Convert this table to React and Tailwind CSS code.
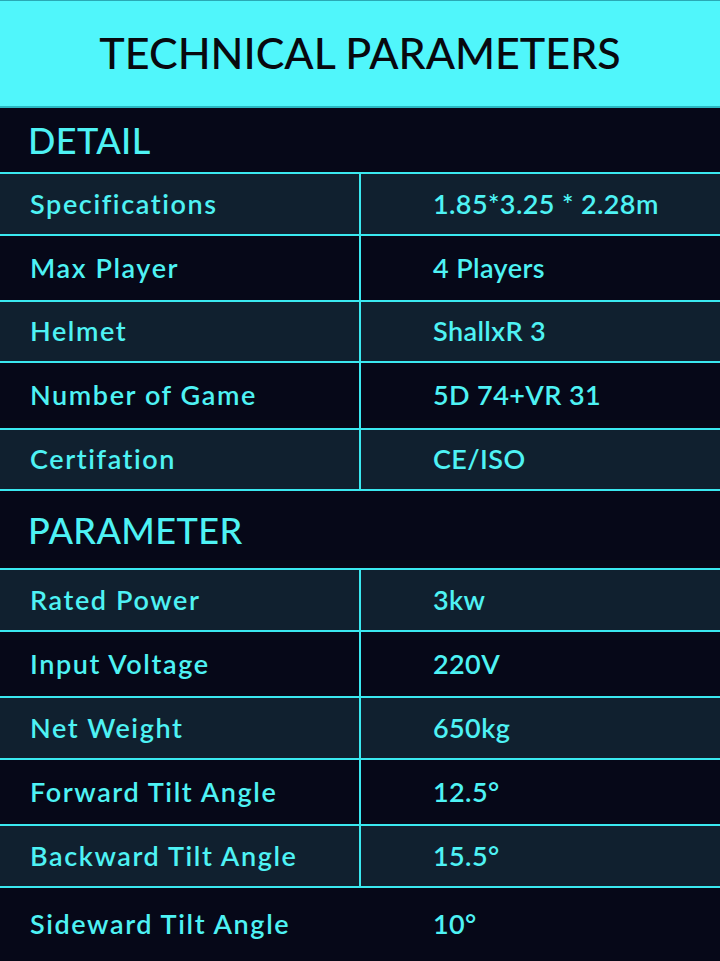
import React from 'react';

const detailRows = [
  { label: 'Specifications', value: '1.85*3.25 * 2.28m', h: 'h-[62px]', light: true },
  { label: 'Max Player', value: '4 Players', h: 'h-[66px]', light: false },
  { label: 'Helmet', value: 'ShallxR 3', h: 'h-[61px]', light: true },
  { label: 'Number of Game', value: '5D 74+VR 31', h: 'h-[67px]', light: false },
  { label: 'Certifation', value: 'CE/ISO', h: 'h-[61px]', light: true }
];

const paramRows = [
  { label: 'Rated Power', value: '3kw', h: 'h-[62px]', light: true },
  { label: 'Input Voltage', value: '220V', h: 'h-[66px]', light: false },
  { label: 'Net Weight', value: '650kg', h: 'h-[62px]', light: true },
  { label: 'Forward Tilt Angle', value: '12.5°', h: 'h-[66px]', light: false },
  { label: 'Backward Tilt Angle', value: '15.5°', h: 'h-[62px]', light: true },
  { label: 'Sideward Tilt Angle', value: '10°', h: 'h-[73px]', light: false, last: true }
];

function Row({ row }) {
  return (
    <div
      className={`flex ${row.h} ${row.light ? 'bg-[#10202f]' : 'bg-[#060818]'} ${
        row.last ? '' : 'border-b-2 border-[#3ae8f0]'
      }`}
    >
      <div
        className={`w-[361px] flex items-center pl-[30px] tracking-[1.6px] ${
          row.last ? '' : 'border-r-2 border-[#3ae8f0]'
        }`}
      >
        {row.label}
      </div>
      <div className="flex-1 flex items-center pl-[72px]">{row.value}</div>
    </div>
  );
}

function SectionTitle({ title, h }) {
  return (
    <div className={`${h} flex items-center pl-[28px] bg-[#060818] border-b-2 border-[#3ae8f0] text-[36px] font-medium`}>
      {title}
    </div>
  );
}

export default function App() {
  return (
    <div
      className="w-[720px] h-[961px] overflow-hidden bg-[#060818] text-[#4ef2f4] text-[27px] font-semibold tracking-[0.4px]"
      style={{ fontFamily: 'Lato, "Open Sans", sans-serif' }}
    >
      <div className="h-[108px] flex items-center justify-center bg-[#50f6fb] border-t border-[#2aa9b4] border-b-2 border-b-[#2ab8c2] text-[#08090f] text-[43px] font-medium tracking-normal">
        TECHNICAL PARAMETERS
      </div>
      <SectionTitle title="DETAIL" h="h-[66px]" />
      {detailRows.map(row => (
        <Row key={row.label} row={row} />
      ))}
      <SectionTitle title="PARAMETER" h="h-[79px]" />
      {paramRows.map(row => (
        <Row key={row.label} row={row} />
      ))}
    </div>
  );
}
